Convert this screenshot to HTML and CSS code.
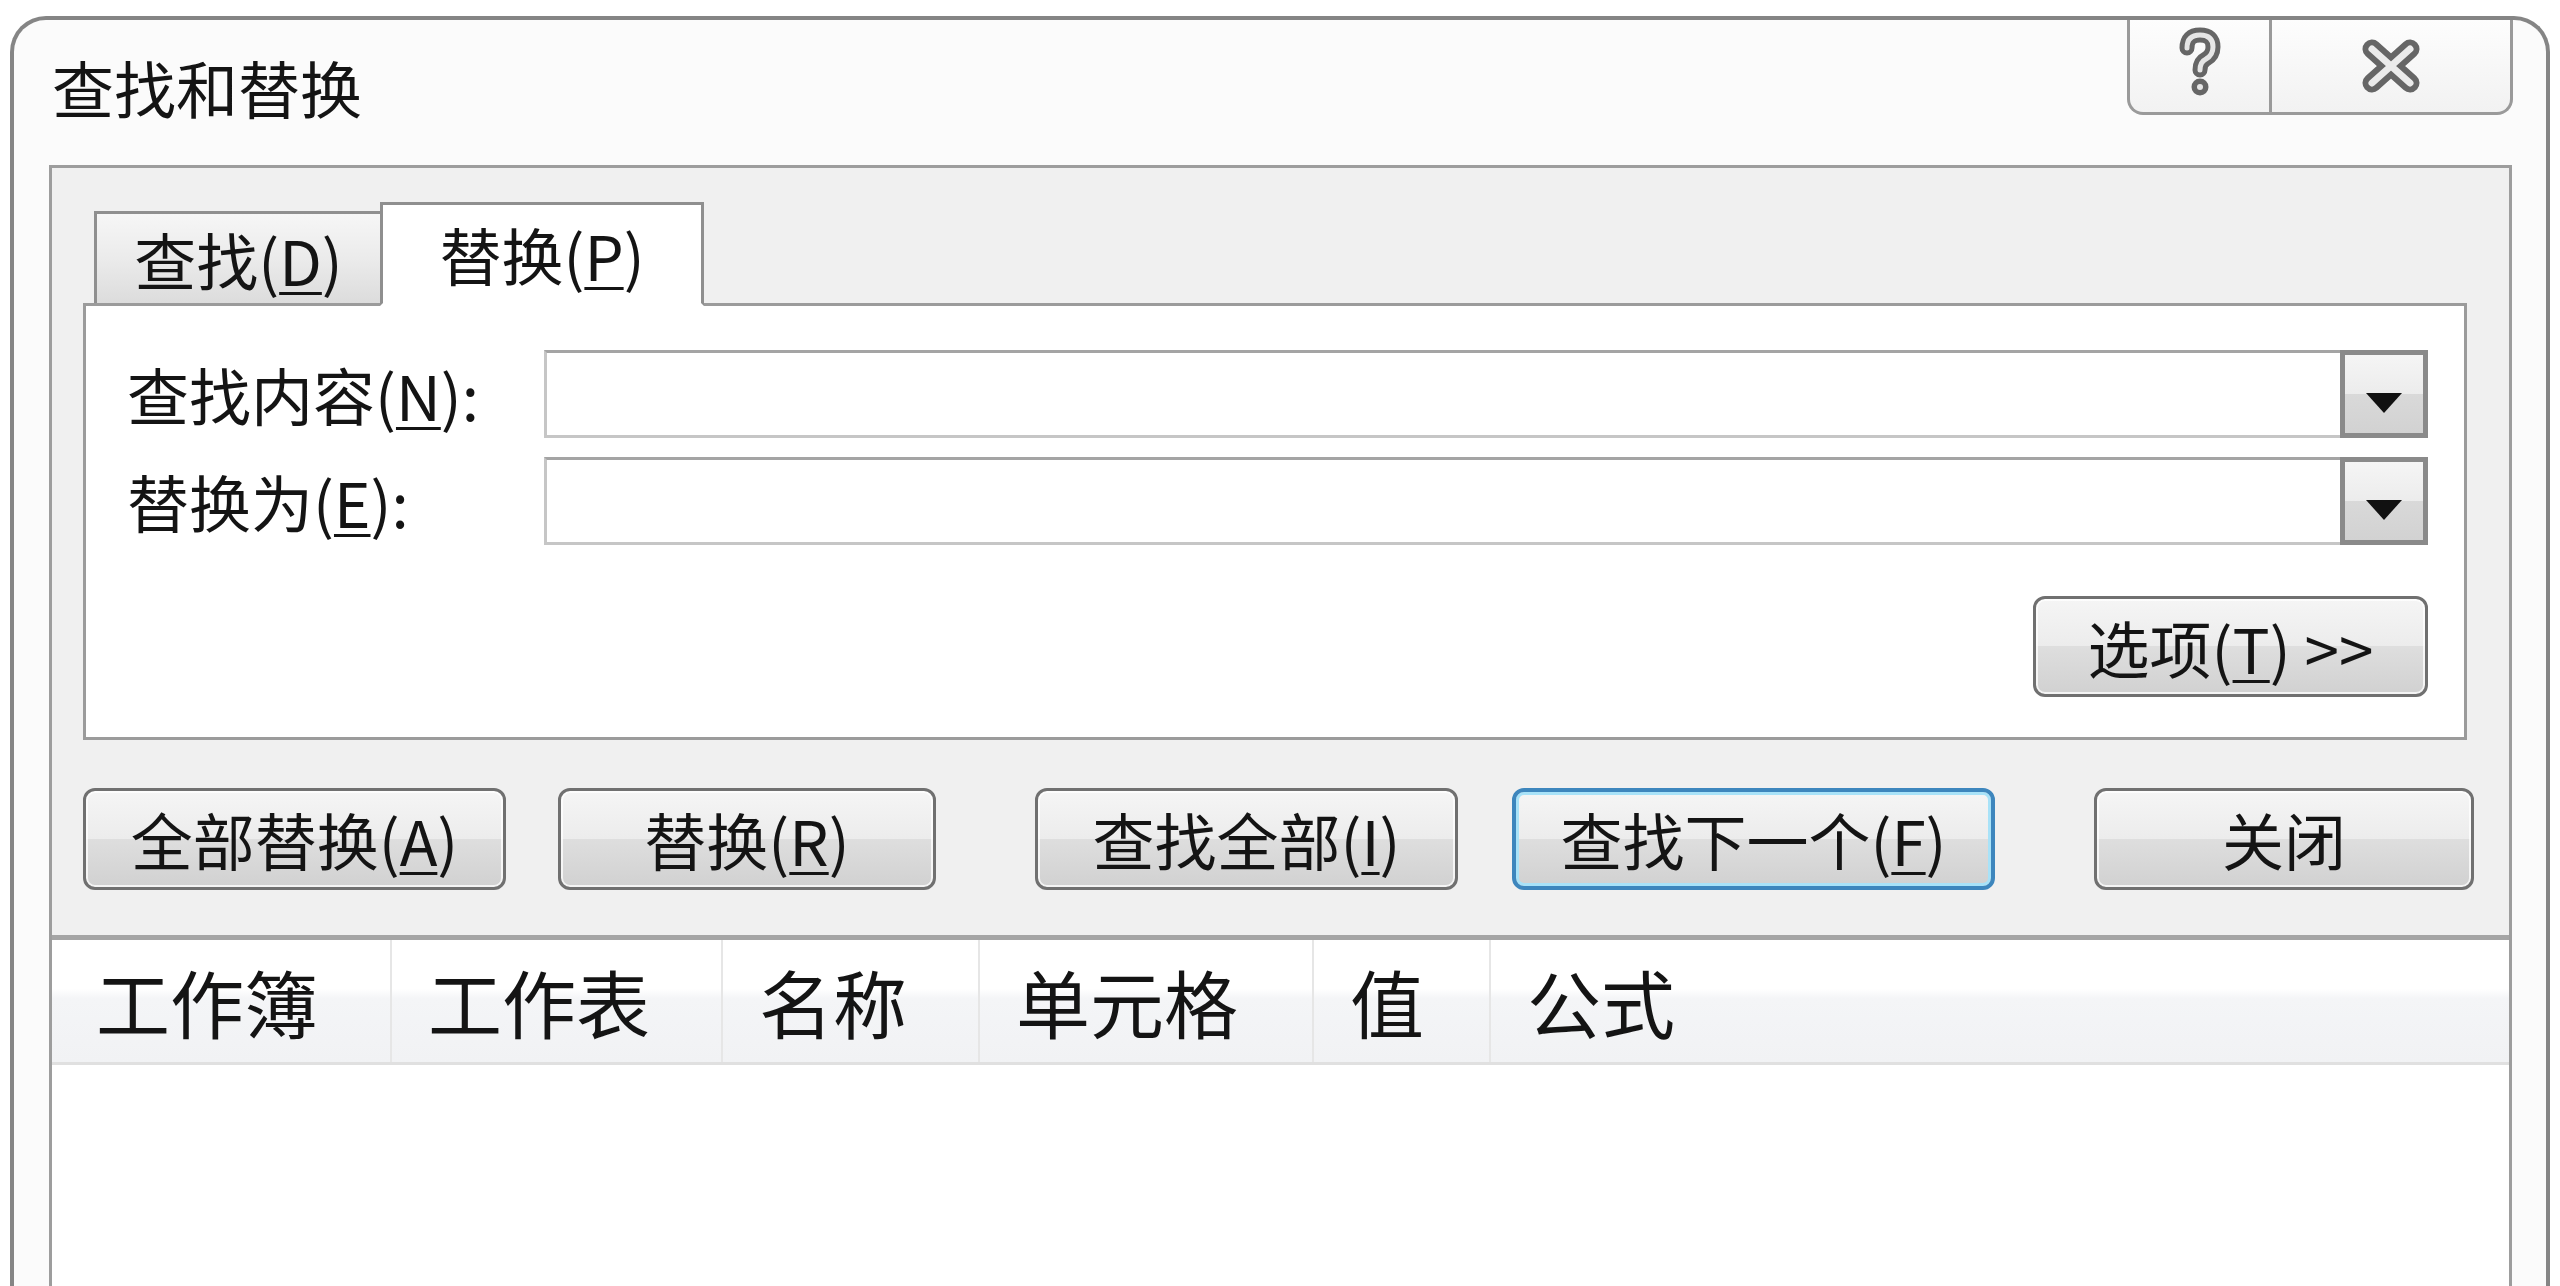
FILE: index.html
```html
<!DOCTYPE html>
<html lang="zh-CN">
<head>
    <meta charset="UTF-8">
    <meta name="viewport" content="width=device-width, initial-scale=1.0">
    <title>查找和替换</title>
    <link rel="stylesheet" href="styles.css">
</head>
<body>

    <div class="dialog">

        <!-- Title bar: caption text and help / close buttons -->
        <div class="title-bar">
            <div class="title">查找和替换</div>
            <div class="caption-buttons">
                <div class="cap-btn cap-help">
                    <svg width="46" height="70" viewBox="0 0 46 70">
                        <path d="M10 21 Q10 8 23 8 Q36 8 36 20 Q36 28 29 32 Q23 35 23 43" fill="none" stroke="#666" stroke-width="15" stroke-linecap="round"/>
                        <circle cx="23" cy="60" r="8.5" fill="#666"/>
                        <path d="M10 21 Q10 8 23 8 Q36 8 36 20 Q36 28 29 32 Q23 35 23 43" fill="none" stroke="#e6e6e6" stroke-width="5" stroke-linecap="round"/>
                        <circle cx="23" cy="60" r="3" fill="#e6e6e6"/>
                    </svg>
                </div>
                <div class="cap-btn cap-close">
                    <svg width="62" height="56" viewBox="0 0 62 56">
                        <path d="M12 11 L50 45 M50 11 L12 45" stroke="#666" stroke-width="19" stroke-linecap="round"/>
                        <path d="M12 11 L50 45 M50 11 L12 45" stroke="#ebebeb" stroke-width="7" stroke-linecap="round"/>
                    </svg>
                </div>
            </div>
        </div>

        <div class="frame">

            <!-- Tabs and the replace page -->
            <div class="tab-area">
                <div class="tabs">
                    <div class="tab">查找(<u>D</u>)</div>
                    <div class="tab active">替换(<u>P</u>)</div>
                </div>
                <div class="tab-panel">
                    <div class="field-row">
                        <label class="field-label" for="findWhat">查找内容(<u>N</u>):</label>
                        <div class="combo">
                            <input type="text" id="findWhat">
                            <div class="combo-btn"><span class="arrow"></span></div>
                        </div>
                    </div>
                    <div class="field-row">
                        <label class="field-label" for="replaceWith">替换为(<u>E</u>):</label>
                        <div class="combo">
                            <input type="text" id="replaceWith">
                            <div class="combo-btn"><span class="arrow"></span></div>
                        </div>
                    </div>
                    <div class="options-row">
                        <button class="btn btn-options">选项(<u>T</u>) &gt;&gt;</button>
                    </div>
                </div>
            </div>

            <!-- Command buttons -->
            <div class="actions">
                <button class="btn btn-replace-all">全部替换(<u>A</u>)</button>
                <button class="btn btn-replace">替换(<u>R</u>)</button>
                <button class="btn btn-find-all">查找全部(<u>I</u>)</button>
                <button class="btn btn-find-next focused">查找下一个(<u>F</u>)</button>
                <button class="btn btn-close">关闭</button>
            </div>

            <!-- Result list -->
            <div class="results">
                <div class="results-head">
                    <div>工作簿</div>
                    <div>工作表</div>
                    <div>名称</div>
                    <div>单元格</div>
                    <div>值</div>
                    <div>公式</div>
                </div>
            </div>

        </div>
    </div>

</body>
</html>
```

FILE: styles.css
```css
* {
    margin: 0;
    padding: 0;
    box-sizing: border-box;
}

body {
    width: 2560px;
    height: 1286px;
    overflow: hidden;
    background-color: #fff;
    font-family: "Noto Sans CJK SC", "Noto Sans", sans-serif;
    color: #141414;
}

u {
    text-decoration-thickness: 3px;
    text-underline-offset: 6px;
}

.dialog {
    margin: 16px 10px 0 10px;
    height: 1400px;
    border: 4px solid #858585;
    border-bottom: none;
    border-radius: 36px 36px 0 0;
    background-color: #fbfbfb;
}

/* title bar */

.title-bar {
    display: flex;
    justify-content: space-between;
    align-items: flex-start;
    height: 145px;
}

.title {
    margin: 36px 0 0 38px;
    font-size: 62px;
    line-height: 62px;
}

.caption-buttons {
    display: flex;
    height: 95px;
    margin-right: 33px;
    border: 3px solid #9a9a9a;
    border-top: none;
    border-radius: 0 0 16px 16px;
    background: linear-gradient(#fdfdfd, #f2f2f2);
}

.cap-btn {
    display: flex;
    align-items: center;
    justify-content: center;
}

.cap-help {
    width: 142px;
    border-right: 3px solid #9a9a9a;
}

.cap-help svg {
    margin-bottom: 8px;
}

.cap-close {
    width: 238px;
}

/* grey frame holding tabs, buttons and list */

.frame {
    margin: 0 34px 0 35px;
    height: 1300px;
    border: 3px solid #9d9d9d;
    border-bottom: none;
    background-color: #f0f0f0;
}

.tab-area {
    padding: 34px 42px 0 31px;
}

.tabs {
    display: flex;
    align-items: flex-end;
    margin-left: 11px;
}

.tab {
    display: flex;
    align-items: center;
    justify-content: center;
    width: 286px;
    height: 92px;
    border: 3px solid #8f8f8f;
    border-bottom: none;
    border-right: none;
    background: linear-gradient(#f6f6f6 0%, #ebebeb 50%, #dcdcdc 100%);
    font-size: 62px;
    line-height: 62px;
}

.tab.active {
    position: relative;
    z-index: 1;
    width: 324px;
    height: 104px;
    margin-bottom: -3px;
    border-right: 3px solid #8f8f8f;
    border-bottom: 3px solid #fff;
    background: #fff;
}

.tab-panel {
    background-color: #fff;
    border: 3px solid #9b9b9b;
    padding: 44px 36px 40px 41px;
}

.field-row {
    display: flex;
    align-items: center;
}

.field-row + .field-row {
    margin-top: 19px;
}

.field-label {
    width: 417px;
    font-size: 62px;
    line-height: 62px;
}

.combo {
    flex: 1;
    display: flex;
    height: 88px;
    border: 3px solid #c6c6c6;
    border-top-color: #a4a4a4;
    background-color: #fff;
}

.combo input {
    flex: 1;
    border: none;
    outline: none;
    background: transparent;
    font: inherit;
    font-size: 48px;
}

.combo-btn {
    display: flex;
    align-items: center;
    justify-content: center;
    width: 88px;
    margin: -3px -3px -3px 0;
    border: 5px solid #8a8a8a;
    background: linear-gradient(#f5f5f5 0%, #ececec 50%, #d9d9d9 50%, #d2d2d2 100%);
}

.arrow {
    width: 0;
    height: 0;
    margin-top: 18px;
    border-left: 18px solid transparent;
    border-right: 18px solid transparent;
    border-top: 20px solid #111;
}

.options-row {
    display: flex;
    justify-content: flex-end;
    margin-top: 51px;
}

/* push buttons */

.btn {
    height: 102px;
    border: 3px solid #707070;
    border-radius: 12px;
    background: linear-gradient(#f5f5f5 0%, #ececec 50%, #dedede 50%, #d1d1d1 100%);
    box-shadow: inset 0 0 0 2px rgba(255, 255, 255, 0.75);
    font: inherit;
    font-size: 62px;
    line-height: 62px;
    color: #141414;
    cursor: pointer;
}

.btn.focused {
    border: 4px solid #3d86bd;
    box-shadow: inset 0 0 0 3px #a8e2f8;
}

.btn-options {
    width: 395px;
    height: 101px;
}

.actions {
    display: flex;
    padding: 48px 0 45px 31px;
}

.btn-replace-all {
    width: 423px;
}

.btn-replace {
    width: 378px;
    margin-left: 52px;
}

.btn-find-all {
    width: 423px;
    margin-left: 99px;
}

.btn-find-next {
    width: 483px;
    margin-left: 54px;
}

.btn-close {
    width: 380px;
    margin-left: 99px;
}

/* result list */

.results {
    height: 400px;
    border-top: 5px solid #a5a5a5;
    background-color: #fff;
}

.results-head {
    display: grid;
    grid-template-columns: 340px 331px 257px 334px 177px 1fr;
    height: 125px;
    border-bottom: 3px solid #e0e0e0;
    background: linear-gradient(#fff 0%, #fff 40%, #f4f5f7 48%, #f1f2f4 100%);
}

.results-head div {
    display: flex;
    align-items: center;
    padding-left: 36px;
    border-right: 2px solid #e6e6e6;
    font-size: 74px;
    line-height: 74px;
}

.results-head div:first-child {
    padding-left: 44px;
}

.results-head div:last-child {
    border-right: none;
}
```
